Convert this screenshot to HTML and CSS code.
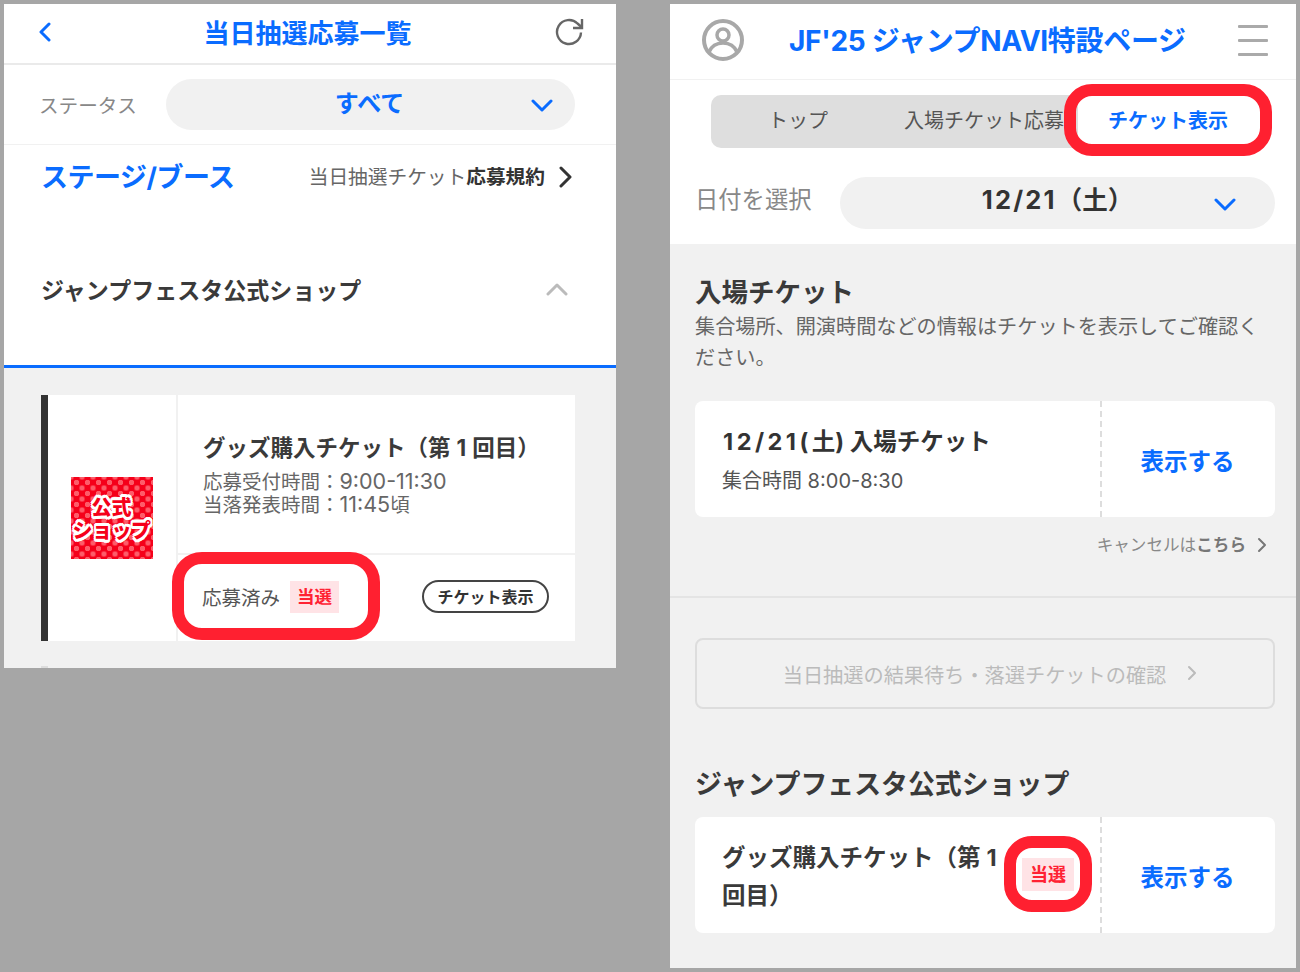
FILE: index.html
```html
<!DOCTYPE html>
<html lang="ja">
<head>
<meta charset="utf-8">
<title>JF'25 ジャンプNAVI</title>
<link rel="stylesheet" href="styles.css">
</head>
<body>
<main class="stage">
  <section class="panel panel-left">
    <header class="lhead">
      <svg class="lhead-back" width="14" height="20" viewBox="0 0 14 20"><path d="M11 2 3 10l8 8" fill="none" stroke="#0a6cff" stroke-width="3" stroke-linecap="round" stroke-linejoin="round"/></svg>
      <h1 class="lhead-title">当日抽選応募一覧</h1>
      <svg class="lhead-reload" width="30" height="30" viewBox="0 0 30 30"><path d="M26 15.500A12 12 0 1 1 22.500 6.500L26.500 10" fill="none" stroke="#666" stroke-width="2.400"/><path d="M27 2v9h-9" fill="none" stroke="#666" stroke-width="2.400"/></svg>
    </header>
    <div class="lstatus">
      <span class="lstatus-label">ステータス</span>
      <div class="pill lstatus-pill">
        <span class="lstatus-value">すべて</span>
        <svg class="pill-chevron" width="22" height="14" viewBox="0 0 22 14"><path d="M2 3l9 9 9-9" fill="none" stroke="#0a6cff" stroke-width="3" stroke-linecap="round" stroke-linejoin="round"/></svg>
      </div>
    </div>
    <div class="lstage">
      <h2 class="lstage-title">ステージ/ブース</h2>
      <div class="lstage-terms"><span>当日抽選チケット<b>応募規約</b></span>
        <svg width="14" height="22" viewBox="0 0 14 22"><path d="M3 2l9 9-9 9" fill="none" stroke="#333" stroke-width="3" stroke-linecap="round" stroke-linejoin="round"/></svg>
      </div>
    </div>
    <div class="laccordion">
      <h3 class="laccordion-title">ジャンプフェスタ公式ショップ</h3>
      <svg width="22" height="14" viewBox="0 0 22 14"><path d="M2 12l9-9 9 9" fill="none" stroke="#bbb" stroke-width="3" stroke-linecap="round" stroke-linejoin="round"/></svg>
    </div>
    <div class="llist">
      <article class="shopcard">
        <div class="shopcard-logo">
          <div class="logo"><span class="logo-a">公式</span><span class="logo-b">ショップ</span></div>
        </div>
        <div class="shopcard-main">
          <div class="shopcard-info">
            <h4 class="shopcard-title">グッズ購入チケット（第<span class="one">1</span>回目）</h4>
            <p class="shopcard-line">応募受付時間：<span class="num">9:00-11:30</span></p>
            <p class="shopcard-line">当落発表時間：<span class="num">11:45</span>頃</p>
          </div>
          <div class="shopcard-foot">
            <span class="shopcard-state">応募済み</span>
            <span class="badge badge-lg">当選</span>
            <span class="ticketbtn">チケット表示</span>
          </div>
        </div>
      </article>
      <div class="nextcard"></div>
    </div>
    <div class="ring ring-l1"></div>
  </section>

  <section class="panel panel-right">
    <header class="rhead">
      <svg class="rhead-user" width="44" height="44" viewBox="0 0 44 44"><circle cx="22" cy="22" r="19" fill="none" stroke="#a8a8a8" stroke-width="4"/><circle cx="22" cy="17" r="6" fill="none" stroke="#a8a8a8" stroke-width="3.500"/><path d="M8 34c3-7 8-9 14-9s11 2 14 9" fill="none" stroke="#a8a8a8" stroke-width="3.500"/></svg>
      <h1 class="rhead-title">JF'25 ジャンプNAVI特設ページ</h1>
      <div class="burger"><i></i><i></i><i></i></div>
    </header>
    <nav class="tabs">
      <span class="tab tab-top">トップ</span>
      <span class="tab tab-entry">入場チケット応募</span>
      <span class="tab tab-active">チケット表示</span>
    </nav>
    <div class="rdate">
      <span class="rdate-label">日付を選択</span>
      <div class="pill rdate-pill">
        <span class="rdate-value"><span class="date">12/21</span>（土）</span>
        <svg class="pill-chevron" width="22" height="14" viewBox="0 0 22 14"><path d="M2 3l9 9 9-9" fill="none" stroke="#0a6cff" stroke-width="3" stroke-linecap="round" stroke-linejoin="round"/></svg>
      </div>
    </div>
    <div class="rbody">
      <div class="rtickets">
        <h2 class="rtickets-title">入場チケット</h2>
        <p class="rtickets-desc">集合場所、開演時間などの情報はチケットを表示してご確認ください。</p>
        <article class="ticket">
          <div class="ticket-main">
            <h3 class="ticket-title"><span class="date date-wide">12/21(</span>土) 入場チケット</h3>
            <p class="ticket-sub">集合時間 8:00-8:30</p>
          </div>
          <div class="ticket-action">表示する</div>
        </article>
        <div class="cancel">キャンセルは<b>こちら</b>
          <svg width="10" height="16" viewBox="0 0 10 16"><path d="M2 2l6 6-6 6" fill="none" stroke="#777" stroke-width="2" stroke-linecap="round" stroke-linejoin="round"/></svg>
        </div>
      </div>
      <div class="rlower">
        <div class="resultbtn">当日抽選の結果待ち・落選チケットの確認
          <svg width="10" height="16" viewBox="0 0 10 16"><path d="M2 2l6 6-6 6" fill="none" stroke="#bbb" stroke-width="2" stroke-linecap="round" stroke-linejoin="round"/></svg>
        </div>
        <h2 class="rshop-title">ジャンプフェスタ公式ショップ</h2>
        <article class="ticket">
          <div class="ticket-main ticket-main-row">
            <h3 class="ticket-title ticket-title-wrap">グッズ購入チケット（第<span class="one">1</span>回目）</h3>
            <span class="badge badge-sm">当選</span>
          </div>
          <div class="ticket-action">表示する</div>
        </article>
      </div>
    </div>
    <div class="ring ring-r1"></div>
    <div class="ring ring-r2"></div>
  </section>
</main>
</body>
</html>
```

FILE: styles.css
```css
* { box-sizing: border-box; }
html, body { margin: 0; padding: 0; }
body {
  background: #a6a6a6;
  font-family: Inter, "Noto Sans CJK JP", "Noto Sans", sans-serif;
  color: #333;
}
h1, h2, h3, h4, p { margin: 0; font-weight: inherit; font-size: inherit; }
.stage { display: flex; align-items: flex-start; gap: 54px; padding: 4px; width: 1300px; height: 972px; overflow: hidden; }
.panel { position: relative; background: #fff; overflow: hidden; flex: none; }
.panel-left { width: 612px; height: 664px; }
.panel-right { width: 626px; height: 964px; }

.pill { display: flex; align-items: center; justify-content: center; position: relative; background: #f1f1f1; border-radius: 26px; }
.pill-chevron { position: absolute; }
.one { margin: 0 6px; }
.num { font-size: 21.500px; line-height: 0; }
.date { letter-spacing: 2.200px; }
.date-wide { letter-spacing: 3.500px; }

/* left */
.lhead { height: 61px; border-bottom: 2px solid #eaeaea; display: flex; align-items: center; justify-content: space-between; padding: 0 31px 4px 34px; }
.lhead-title { font-size: 26px; line-height: 36px; font-weight: 700; color: #0a6cff; margin: 4px 0 0 8px; }
.lstatus { height: 80px; border-bottom: 1px solid #f1f1f1; display: flex; align-items: center; padding: 0 41px 0 35px; justify-content: space-between; }
.lstatus-label { font-size: 19.600px; color: #888; }
.lstatus-pill { width: 409px; height: 51px; padding-right: 2px; }
.lstatus-value { font-size: 24px; line-height: 34px; font-weight: 700; color: #0a6cff; margin-top: -1px; }
.lstatus-pill .pill-chevron { right: 22px; top: 19px; }
.lstage { display: flex; justify-content: space-between; align-items: center; height: 64px; padding: 0 44px 0 37px; }
.lstage-title { font-size: 27px; line-height: 40px; font-weight: 700; color: #0a6cff; letter-spacing: -0.500px; margin-top: 2px; }
.lstage-terms { display: flex; align-items: center; font-size: 19.700px; color: #666; }
.lstage-terms span { margin-bottom: 4px; }
.lstage-terms b { color: #333; font-weight: 700; }
.lstage-terms svg { margin-left: 13px; }
.laccordion { height: 159px; padding: 7px 48px 0 37px; border-bottom: 3px solid #0a6cff; display: flex; align-items: center; justify-content: space-between; }
.laccordion svg { margin-bottom: 4px; }
.laccordion-title { font-size: 23px; line-height: 32px; font-weight: 700; color: #3a3a3a; }
.llist { background: #f1f1f1; height: 300px; padding: 27px 41px 0 37px; }
.shopcard { display: flex; height: 246px; background: #fff; border-left: 7px solid #333; }
.shopcard-logo { width: 128px; flex: none; display: flex; align-items: center; justify-content: center; }
.logo {
  width: 82px; height: 82px; margin-left: -1px; padding-top: 4px; display: flex; flex-direction: column; align-items: center; justify-content: center;
  background-color: #f5001a;
  background-image: radial-gradient(circle, rgba(255,115,125,.8) 2.500px, transparent 3px), radial-gradient(circle, rgba(255,115,125,.8) 2.500px, transparent 3px);
  background-size: 11px 11px;
  background-position: 0 0, 5.500px 5.500px;
  font-weight: 900; color: #f5001a; line-height: 23px;
  text-shadow: 2px 0 #fff, -2px 0 #fff, 0 2px #fff, 0 -2px #fff, 2px 2px #fff, -2px 2px #fff, 2px -2px #fff, -2px -2px #fff, 1px 3px #fff, -1px 3px #fff, 1px -3px #fff, -1px -3px #fff;
}
.logo-a { font-size: 20px; }
.logo-b { font-size: 20px; letter-spacing: -0.500px; white-space: nowrap; }
.shopcard-main { flex: 1; border-left: 2px solid #f1f1f1; display: flex; flex-direction: column; }
.shopcard-info { height: 160px; padding: 37px 0 0 25px; border-bottom: 2px solid #f1f1f1; }
.shopcard-title { font-size: 22.500px; line-height: 32px; font-weight: 700; color: #3a3a3a; margin-bottom: 7px; }
.shopcard-line { font-size: 19.500px; line-height: 23px; color: #666; }
.shopcard-foot { flex: 1; display: flex; align-items: center; padding: 0 26px 3px 24px; }
.shopcard-state { font-size: 19.500px; color: #555; margin-right: 10px; }
.badge { display: inline-flex; align-items: center; justify-content: center; background: #ffe3e6; color: #ff2233; font-weight: 700; flex: none; }
.badge-lg { width: 49px; height: 32px; font-size: 17.500px; padding-bottom: 3px; }
.badge-sm { width: 52px; height: 33px; font-size: 18px; padding-bottom: 3px; }
.ticketbtn { margin-left: auto; width: 127px; height: 33px; border: 2px solid #444; border-radius: 17px; font-size: 16px; font-weight: 700; display: flex; align-items: center; justify-content: center; color: #333; padding-bottom: 2px; }
.nextcard { width: 7px; height: 3px; margin-top: 25px; background: #ddd; }

.ring { position: absolute; border: 12px solid #ff2030; background: transparent; }
.ring-l1 { left: 168px; top: 548px; width: 208px; height: 88px; border-radius: 30px; }
.ring-r1 { left: 394px; top: 80px; width: 208px; height: 72px; border-radius: 28px; }
.ring-r2 { left: 334px; top: 832px; width: 88px; height: 76px; border-radius: 28px; }

/* right */
.rhead { height: 76px; border-bottom: 1px solid #f1f1f1; display: flex; align-items: center; padding: 0 28px 4px 31px; }
.rhead-title { font-size: 28px; line-height: 40px; font-weight: 700; color: #0a6cff; margin: 2px 0 0 44px; white-space: nowrap; letter-spacing: -.3px; }
.burger { margin-left: auto; display: flex; flex-direction: column; gap: 11px; width: 30px; margin-top: 2px; }
.burger i { display: block; height: 3px; background: #aaa; border-radius: 1px; }
.tabs { margin: 15px 0 0 41px; width: 547px; height: 53px; background: #dedede; border-radius: 10px; display: flex; align-items: center; overflow: hidden; }
.tab { font-size: 20px; line-height: 30px; white-space: nowrap; color: #555; padding-bottom: 1px; }
.tab-top { width: 174px; text-align: center; }
.tab-entry { width: 193px; padding-left: 19px; overflow: hidden; }
.tab-active { flex: 1; height: 53px; line-height: 52px; padding-bottom: 0; background: #fff; color: #0a6cff; font-weight: 700; text-align: center; }
.rdate { height: 52px; margin-top: 29px; display: flex; align-items: center; justify-content: space-between; padding: 0 21px 0 25px; }
.rdate-label { font-size: 23.300px; color: #888; margin-top: -10px; }
.rdate-pill { width: 435px; height: 52px; }
.rdate-value { font-size: 25.500px; line-height: 36px; font-weight: 700; color: #333; margin-top: -6px; }
.rdate-pill .pill-chevron { right: 39px; top: 20px; }
.rbody { margin-top: 15px; background: #f1f1f1; height: 724px; }
.rtickets { height: 354px; padding: 26px 21px 0 25px; border-bottom: 2px solid #e4e4e4; }
.rtickets-title { font-size: 26.500px; line-height: 44px; font-weight: 700; color: #3a3a3a; }
.rtickets-desc { font-size: 20.150px; line-height: 31px; color: #666; margin-top: -3px; width: 575px; }
.ticket { display: flex; height: 116px; background: #fff; border-radius: 8px; margin-top: 28px; overflow: hidden; }
.ticket-main { width: 407px; padding: 21px 0 0 28px; border-right: 2px dashed #ddd; flex: none; }
.ticket-title { font-size: 23.500px; line-height: 40px; font-weight: 700; color: #333; }
.ticket-sub { font-size: 20px; line-height: 30px; color: #555; margin-top: 4px; margin-left: -1px; }
.ticket-action { flex: 1; display: flex; align-items: center; justify-content: center; font-size: 23.500px; font-weight: 700; color: #0a6cff; padding: 2px 2px 0 0; }
.ticket-main-row { display: flex; padding: 22px 0 0 27px; position: relative; }
.ticket-title-wrap { width: 285px; line-height: 38px; font-size: 23.500px; color: #3a3a3a; flex: none; }
.badge-sm { position: absolute; left: 327px; top: 41px; }
.cancel { display: flex; align-items: center; justify-content: flex-end; margin-top: 13px; font-size: 16.600px; line-height: 30px; color: #888; padding-right: 8px; }
.cancel b { color: #777; font-weight: 700; }
.cancel svg { margin-left: 11px; }
.rlower { padding: 40px 21px 0 25px; }
.resultbtn { height: 71px; border: 2px solid #ddd; border-radius: 8px; display: flex; align-items: center; justify-content: center; font-size: 20.200px; color: #bbb; padding: 2px 0 0 10px; }
.resultbtn svg { margin-left: 21px; margin-top: -4px; }
.rshop-title { font-size: 26.900px; line-height: 40px; font-weight: 700; color: #3a3a3a; margin-top: 55px; white-space: nowrap; }
.rlower .ticket { margin-top: 13px; }
```
